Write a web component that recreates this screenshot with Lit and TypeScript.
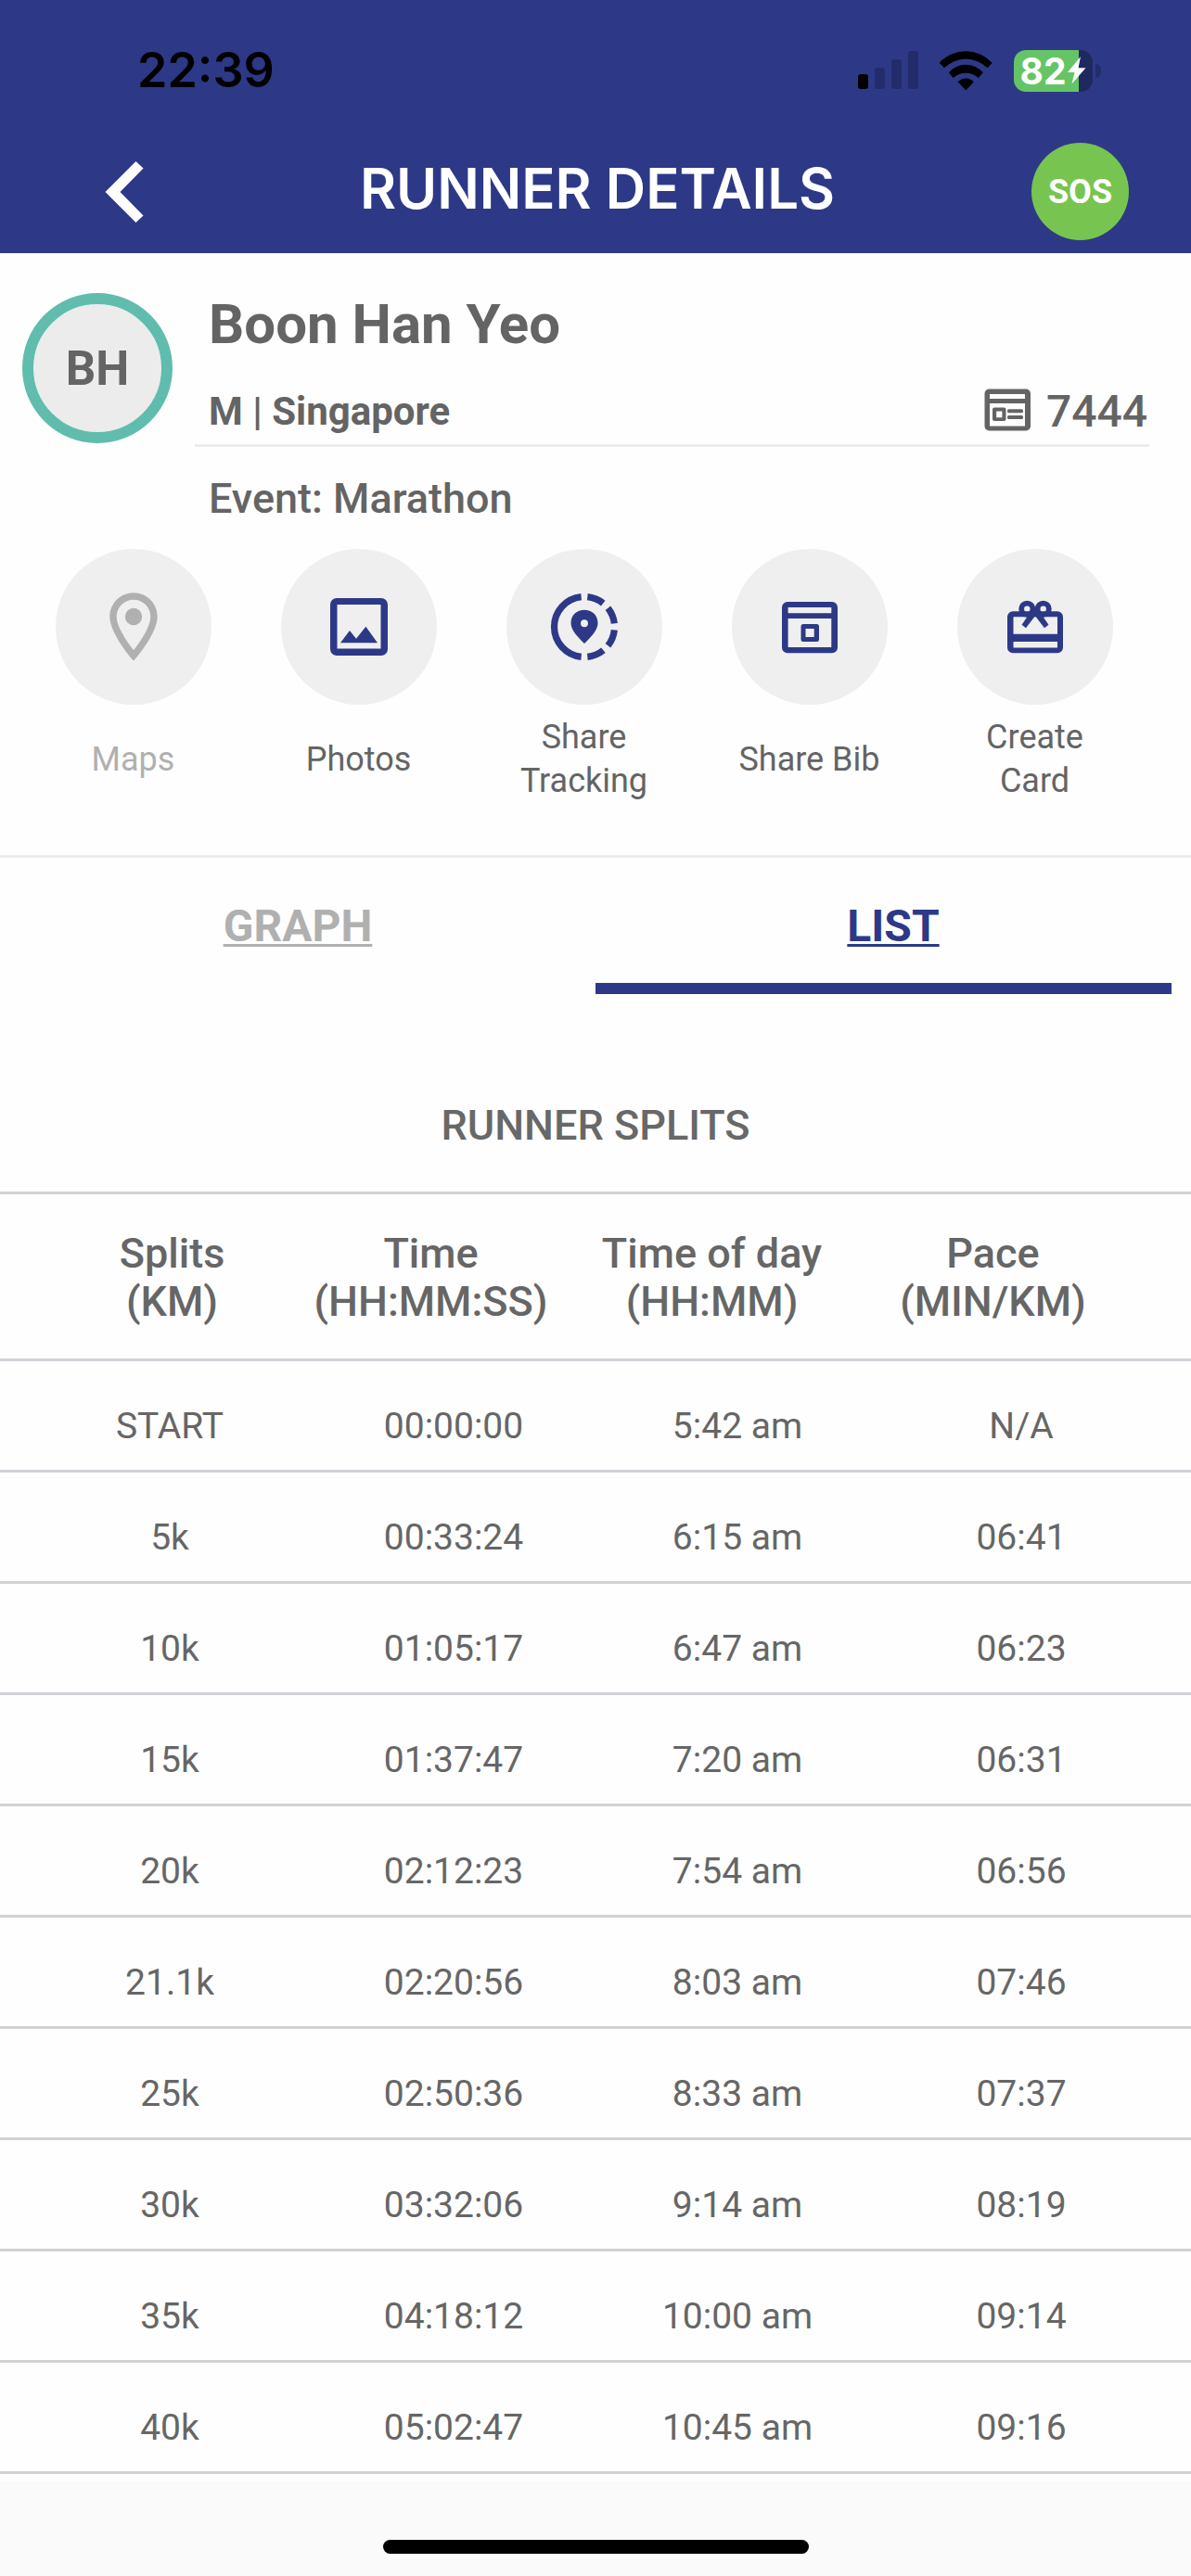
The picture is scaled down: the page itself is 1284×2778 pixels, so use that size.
import { LitElement, html, css, svg, nothing } from "lit";
import { customElement, state } from "lit/decorators.js";
import { classMap } from "lit/directives/class-map.js";

interface Action {
  label: string;
  icon: unknown;
  disabled?: boolean;
}

type Tab = "GRAPH" | "LIST";

const ACTIONS: Action[] = [
  {
    label: "Maps",
    disabled: true,
    icon: svg`<g transform="translate(40 40) scale(3.667)">
      <path d="M12 2C8.13 2 5 5.13 5 9c0 5.25 7 13 7 13s7-7.75 7-13c0-3.87-3.13-7-7-7zM7 9c0-2.76 2.24-5 5-5s5 2.24 5 5c0 2.88-2.88 7.19-5 9.88C9.92 16.21 7 11.85 7 9z"/>
      <circle cx="12" cy="9" r="2.5"/>
    </g>`,
  },
  {
    label: "Photos",
    icon: svg`<path fill-rule="evenodd" d="M60 53h48a7 7 0 0 1 7 7v48a7 7 0 0 1-7 7H60a7 7 0 0 1-7-7V60a7 7 0 0 1 7-7zM60.500 60v47.500H107.500V60z"/>
      <path d="M64 101.300 74 88l7 8.700 10.400-13 12.600 17.600z"/>`,
  },
  {
    label: "Share Tracking",
    icon: svg`<circle cx="84" cy="84" r="32.500" fill="none" stroke="currentColor" stroke-width="7.200" pathLength="360"
        stroke-dasharray="32.500 13 32 12.500 32.500 12.500 33 12 168 12" stroke-dashoffset="-6" transform="rotate(-90 84 84)"/>
      <path fill-rule="evenodd" d="M84 102C74.500 93 69.500 86 69.500 80 69.500 71 76 65.700 84 65.700S98.500 71 98.500 80C98.500 86 93.500 93 84 102zM84 76.300a3.900 3.900 0 1 0 0 7.900 3.900 3.900 0 1 0 0-7.900z"/>`,
  },
  {
    label: "Share Bib",
    icon: svg`<path fill-rule="evenodd" d="M60 57h48a6 6 0 0 1 6 6v43.300a6 6 0 0 1-6 6H60a6 6 0 0 1-6-6V63a6 6 0 0 1 6-6zM60.600 63v6.300H107.300V63zM60.600 75v31H107.300V75z"/>
      <path fill-rule="evenodd" d="M77 81h14.500a2.500 2.500 0 0 1 2.500 2.500v14a2.500 2.500 0 0 1-2.500 2.500H77a2.500 2.500 0 0 1-2.500-2.500v-14A2.500 2.500 0 0 1 77 81zM79.500 86v9h9.200v-9z"/>`,
  },
  {
    label: "Create Card",
    icon: svg`<path fill-rule="evenodd" d="M60 67.300h48a6 6 0 0 1 6 6v33a6 6 0 0 1-6 6H60a6 6 0 0 1-6-6v-33a6 6 0 0 1 6-6zM60.500 73.300v18.500H108V73.300zM60.500 100v6.500H108V100z"/>
      <circle cx="75.300" cy="64.700" r="6.100" fill="none" stroke="currentColor" stroke-width="5.800"/>
      <circle cx="92.700" cy="64.700" r="6.100" fill="none" stroke="currentColor" stroke-width="5.800"/>
      <path d="M69.500 81.700 78 69.500 84 62l6 7.500 8.500 12.200-4.500 3.600L84 72.300 74 85.300z"/>`,
  },
];

const COLUMNS = [
  ["Splits", "(KM)"],
  ["Time", "(HH:MM:SS)"],
  ["Time of day", "(HH:MM)"],
  ["Pace", "(MIN/KM)"],
];

const SPLITS = [
  ["START", "00:00:00", "5:42 am", "N/A"],
  ["5k", "00:33:24", "6:15 am", "06:41"],
  ["10k", "01:05:17", "6:47 am", "06:23"],
  ["15k", "01:37:47", "7:20 am", "06:31"],
  ["20k", "02:12:23", "7:54 am", "06:56"],
  ["21.1k", "02:20:56", "8:03 am", "07:46"],
  ["25k", "02:50:36", "8:33 am", "07:37"],
  ["30k", "03:32:06", "9:14 am", "08:19"],
  ["35k", "04:18:12", "10:00 am", "09:14"],
  ["40k", "05:02:47", "10:45 am", "09:16"],
];

@customElement("status-bar")
class StatusBar extends LitElement {
  static styles = css`
    :host {
      display: flex;
      align-items: center;
      justify-content: space-between;
      padding: 48px 97px 0 148px;
      color: #000;
      font-family: Inter, "Liberation Sans", sans-serif;
    }
    .time {
      font-size: 52px;
      line-height: 56px;
      font-weight: 600;
    }
    .indicators {
      display: flex;
      align-items: center;
    }
    .signal {
      width: 65px;
      height: 42px;
      margin-right: 22px;
    }
    .wifi {
      width: 58px;
      height: 44px;
      margin-right: 23px;
    }
    .battery {
      display: flex;
      align-items: center;
      justify-content: center;
      gap: 2px;
      width: 85px;
      height: 45px;
      box-sizing: border-box;
      border-radius: 13px;
      background: linear-gradient(to right, #65c466 70px, #1f295f 70px);
      color: #fff;
      font-size: 39px;
      line-height: 45px;
      font-weight: 700;
    }
    .bolt {
      width: 20px;
      height: 30px;
    }
    .nub {
      width: 6px;
      height: 15px;
      margin-left: 3px;
      border-radius: 0 6px 6px 0;
      background: #232d69;
    }
  `;

  render() {
    return html`
      <span class="time">22:39</span>
      <span class="indicators">
        <svg class="signal" viewBox="0 0 65 42" aria-hidden="true">
          <rect x="0" y="25" width="11" height="16" rx="3" />
          <g fill="#232c6a">
            <rect x="18" y="18" width="11" height="23" rx="3" />
            <rect x="36" y="9" width="11" height="32" rx="3" />
            <rect x="54" y="0" width="11" height="41" rx="3" />
          </g>
        </svg>
        <svg class="wifi" viewBox="0 0 58 44" aria-hidden="true">
          <path d="M.6 13.700A38.800 38.800 0 0 1 57.700 13.700L52.600 19.300A33 33 0 0 0 5.900 19.300z" />
          <path d="M10.800 24.300A24.200 24.200 0 0 1 47.800 24.300L42.800 30A20 20 0 0 0 15.700 30z" />
          <path d="M20.700 34.300A11.500 11.500 0 0 1 37.900 34.300L29.300 43.400z" />
        </svg>
        <span class="battery">
          82
          <svg class="bolt" viewBox="0 0 20 30" aria-hidden="true">
            <path fill="#fff" d="M14 0 0 17H7.500L4.500 29.500 19.500 12.300H11.500z" />
          </svg>
        </span>
        <span class="nub"></span>
      </span>
    `;
  }
}

@customElement("splits-table")
class SplitsTable extends LitElement {
  static styles = css`
    :host {
      display: block;
      color: #666;
    }
    .table,
    .head,
    .body {
      display: block;
    }
    .row {
      display: grid;
      border-bottom: 3px solid #d1d1d6;
      text-align: center;
    }
    .labels {
      grid-template-columns: 255fr 303fr 303fr 303fr;
      padding: 38px 62px 35px 58px;
      font-size: 45px;
      line-height: 52px;
    }
    .split {
      grid-template-columns: repeat(4, 1fr);
      padding: 47px 30px 24px;
      font-size: 39px;
      line-height: 46px;
    }
    .label {
      padding: 0;
      font-weight: 500;
      white-space: nowrap;
    }
    .value {
      padding: 0;
    }
  `;

  render() {
    return html`
      <table class="table" aria-label="Runner splits">
        <thead class="head">
          <tr class="row labels">
            ${COLUMNS.map(
              ([name, unit]) => html`<th class="label" scope="col">${name}<br />${unit}</th>`
            )}
          </tr>
        </thead>
        <tbody class="body">
          ${SPLITS.map(
            (row) => html`<tr class="row split">
              ${row.map((value) => html`<td class="value">${value}</td>`)}
            </tr>`
          )}
        </tbody>
      </table>
    `;
  }
}

@customElement("app-root")
class AppRoot extends LitElement {
  static styles = css`
    :host {
      display: flex;
      flex-direction: column;
      min-height: 100vh;
      background: #fefefe;
      color: #646464;
      font-family: Roboto, "Liberation Sans", sans-serif;
    }
    button {
      margin: 0;
      padding: 0;
      border: 0;
      background: none;
      color: inherit;
      font: inherit;
      cursor: pointer;
    }
    h1,
    h2,
    h3,
    p {
      margin: 0;
    }
    .header {
      background: #2d3987;
      color: #fff;
    }
    .nav {
      display: grid;
      grid-template-columns: 85px 1fr 105px;
      align-items: center;
      padding: 50px 67px 14px 91px;
    }
    .back {
      display: flex;
      align-items: center;
      justify-content: center;
      height: 105px;
    }
    .chevron {
      width: 42px;
      height: 66px;
    }
    .title {
      padding-bottom: 8px;
      font-family: Inter, "Liberation Sans", sans-serif;
      font-size: 60px;
      line-height: 70px;
      font-weight: 600;
      text-align: center;
      white-space: nowrap;
    }
    .sos {
      height: 105px;
      border-radius: 50%;
      background: #78c450;
      font-size: 36px;
      font-weight: 700;
    }
    .profile {
      display: grid;
      grid-template-columns: 162px 1fr;
      column-gap: 24px;
      align-items: start;
      padding: 43px 45px 27px 24px;
    }
    .avatar {
      display: flex;
      align-items: center;
      justify-content: center;
      height: 162px;
      box-sizing: border-box;
      border: 12px solid #60bdae;
      border-radius: 50%;
      background: #ececec;
      font-size: 51px;
      font-weight: 700;
    }
    .name {
      padding-left: 15px;
      font-size: 60px;
      line-height: 68px;
      font-weight: 700;
    }
    .meta {
      display: flex;
      align-items: center;
      justify-content: space-between;
      height: 72px;
      margin-top: 23px;
      padding-left: 15px;
      border-bottom: 3px solid #ececec;
      font-size: 42px;
      font-weight: 700;
    }
    .bib {
      display: flex;
      align-items: center;
      gap: 16px;
      padding-right: 2px;
      font-size: 48px;
      font-weight: 500;
    }
    .bib-icon {
      width: 52px;
      height: 50px;
    }
    .event {
      margin-top: 29px;
      padding-left: 15px;
      font-size: 45px;
      line-height: 54px;
      font-weight: 500;
    }
    .actions {
      display: grid;
      grid-template-columns: repeat(5, 1fr);
      padding: 0 47px 56px 22px;
      border-bottom: 3px solid #ececec;
    }
    .action {
      display: flex;
      flex-direction: column;
      align-items: center;
      gap: 12px;
      font-size: 36px;
      line-height: 47px;
    }
    .action:disabled {
      color: #b0b0b0;
      cursor: default;
    }
    .disc {
      width: 168px;
      height: 168px;
      border-radius: 50%;
      background: #efefef;
      color: #2d3987;
    }
    .action:disabled .disc {
      color: #b0b0b0;
    }
    .glyph {
      display: block;
      fill: currentColor;
    }
    .caption {
      display: flex;
      align-items: center;
      width: min-content;
      min-width: 168px;
      height: 94px;
      justify-content: center;
    }
    .tabs {
      display: grid;
      grid-template-columns: 1fr 1fr;
    }
    .tab {
      padding: 46px 0 33px;
      color: #b0b0b0;
      font-size: 48px;
      line-height: 56px;
      font-weight: 700;
      text-decoration: underline;
      text-decoration-thickness: 3px;
      text-underline-offset: 3px;
      text-decoration-skip-ink: none;
    }
    .tab.selected {
      color: #2d3987;
    }
    .marker {
      height: 12px;
      margin: 0 21px 0 50%;
      background: #2d3987;
    }
    .marker.first {
      margin: 0 50% 0 21px;
    }
    .section {
      padding: 115px 0 44px;
      border-bottom: 3px solid #d1d1d6;
      color: #686868;
      font-size: 45px;
      line-height: 54px;
      font-weight: 500;
      text-align: center;
    }
    .footer {
      display: flex;
      flex: 1;
      align-items: flex-end;
      justify-content: center;
      margin-top: 8px;
      padding: 63px 0 24px;
      background: #fafafa;
    }
    .home {
      width: 459px;
      height: 15px;
      border-radius: 8px;
      background: #000;
    }
  `;

  @state() private tab: Tab = "LIST";

  private renderTab(tab: Tab) {
    const selected = this.tab === tab;
    return html`<button
      class=${classMap({ tab: true, selected })}
      role="tab"
      aria-selected=${selected}
      @click=${() => (this.tab = tab)}
    >${tab}</button>`;
  }

  render() {
    return html`
      <header class="header">
        <status-bar></status-bar>
        <nav class="nav">
          <button class="back" aria-label="Back">
            <svg class="chevron" viewBox="0 0 42 66" aria-hidden="true">
              <path fill="#fff" d="M33.500 0 41.500 7.500 16.500 33 41.500 58.500 33.500 66 .5 33z" />
            </svg>
          </button>
          <h1 class="title">RUNNER DETAILS</h1>
          <button class="sos">SOS</button>
        </nav>
      </header>

      <section class="profile">
        <div class="avatar">BH</div>
        <div>
          <h2 class="name">Boon Han Yeo</h2>
          <div class="meta">
            <span>M | Singapore</span>
            <span class="bib">
              <svg class="bib-icon" viewBox="0 0 52 50" fill="#646464" aria-hidden="true">
                <path fill-rule="evenodd" d="M6.500 1.500H46a5 5 0 0 1 5 5V41.500a5 5 0 0 1-5 5H6.500a5 5 0 0 1-5-5V6.500a5 5 0 0 1 5-5zM7 7v5H45V7zM7 17V41.500H45V17z" />
                <path fill-rule="evenodd" d="M12 21.500H22.500a2 2 0 0 1 2 2V34a2 2 0 0 1-2 2H12a2 2 0 0 1-2-2V23.500a2 2 0 0 1 2-2zM14.200 25.500v6.800h6.200V25.500z" />
                <rect x="26" y="23.300" width="17" height="4" rx="1.500" />
                <rect x="26" y="30" width="17" height="4" rx="1.500" />
              </svg>
              7444
            </span>
          </div>
          <p class="event">Event: Marathon</p>
        </div>
      </section>

      <section class="actions">
        ${ACTIONS.map(
          (action) => html`<button class="action" ?disabled=${action.disabled ?? false}>
            <span class="disc">
              <svg class="glyph" viewBox="0 0 168 168" aria-hidden="true">${action.icon}</svg>
            </span>
            <span class="caption">${action.label}</span>
          </button>`
        )}
      </section>

      <div class="tabs" role="tablist">${this.renderTab("GRAPH")}${this.renderTab("LIST")}</div>
      <div class=${classMap({ marker: true, first: this.tab === "GRAPH" })}></div>

      <h3 class="section">RUNNER SPLITS</h3>
      ${this.tab === "LIST" ? html`<splits-table></splits-table>` : nothing}

      <footer class="footer"><div class="home"></div></footer>
    `;
  }
}
